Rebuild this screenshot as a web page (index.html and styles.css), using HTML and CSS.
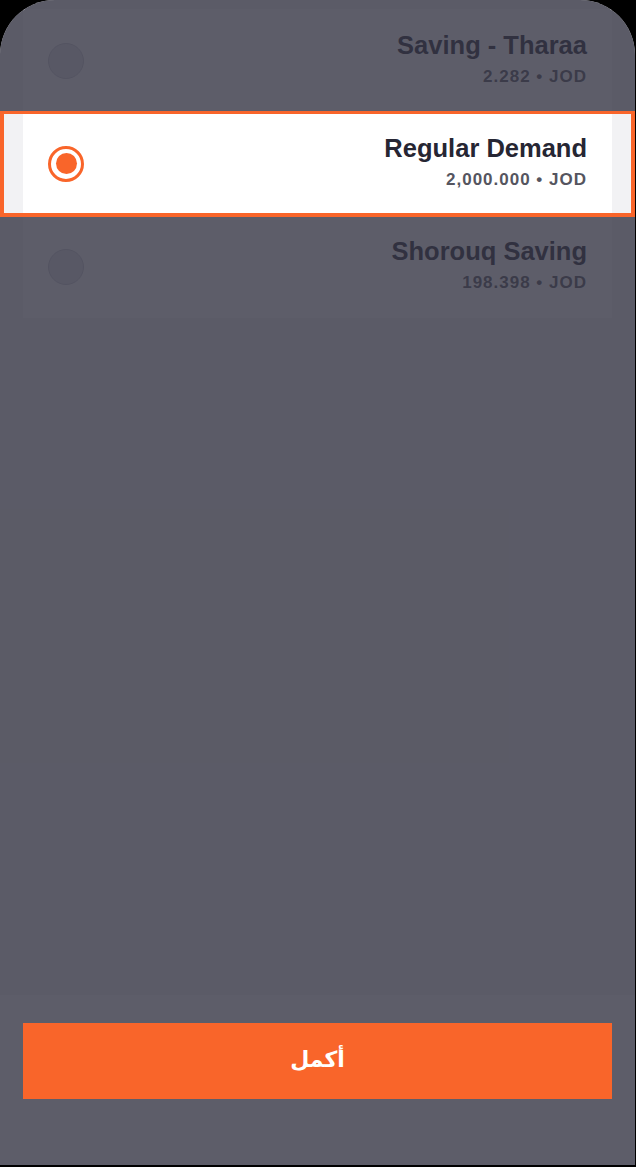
FILE: index.html
```html
<!DOCTYPE html>
<html lang="en">
<head>
<meta charset="utf-8">
<title>Select account</title>
<link rel="stylesheet" href="styles.css">
</head>
<body>
<div class="phone">
  <main class="list-area">
    <section class="card">
      <div class="row">
        <span class="radio"></span>
        <div class="info">
          <div class="title">Saving - Tharaa</div>
          <div class="amount">2.282 • JOD</div>
        </div>
      </div>
      <div class="row is-focused">
        <span class="radio is-checked"><span class="dot"></span></span>
        <div class="info">
          <div class="title">Regular Demand</div>
          <div class="amount">2,000.000 • JOD</div>
        </div>
      </div>
      <div class="row">
        <span class="radio"></span>
        <div class="info">
          <div class="title">Shorouq Saving</div>
          <div class="amount">198.398 • JOD</div>
        </div>
      </div>
    </section>
  </main>
  <footer class="footer">
    <button class="continue" dir="rtl" lang="ar">أكمل</button>
  </footer>
  <div class="overlay"></div>
</div>
</body>
</html>
```
FILE: styles.css
```css
html, body {
  margin: 0;
  padding: 0;
  background: #000;
}

body {
  width: 636px;
  height: 1167px;
  overflow: hidden;
  font-family: "Liberation Sans", Arial, sans-serif;
}

.phone {
  position: relative;
  width: 635px;
  height: 1165px;
  background: #f2f2f4;
  border-radius: 55px 55px 0 0;
  overflow: hidden;
  display: flex;
  flex-direction: column;
}

.list-area {
  flex: 1;
  padding-top: 9px;
}

.card {
  margin: 0 23px;
  background: #fff;
  border-radius: 0 0 8px 8px;
}

.row {
  display: flex;
  align-items: center;
  justify-content: space-between;
  height: 103px;
  box-sizing: border-box;
  padding: 0 25px;
  background: #fff;
}

.row.is-focused {
  position: relative;
  z-index: 2;
}

.row.is-focused::before {
  content: "";
  position: absolute;
  top: -1px;
  bottom: -2px;
  left: -23px;
  right: -23px;
  z-index: -1;
  border: 4px solid #f9652a;
  border-top-width: 3.5px;
  background-clip: padding-box;
  background-image: linear-gradient(to right,
      #f2f2f4 19px, #fff 19px,
      #fff calc(100% - 19px), #f2f2f4 calc(100% - 19px));
}

.radio {
  box-sizing: border-box;
  width: 36px;
  height: 36px;
  border-radius: 50%;
  background: #e4e4e9;
  border: 1.5px solid #cdcdd5;
  display: flex;
  align-items: center;
  justify-content: center;
  flex: none;
}

.radio.is-checked {
  background: #fff;
  border: 3px solid #f9652a;
}

.radio .dot {
  width: 21px;
  height: 21px;
  border-radius: 50%;
  background: #f9652a;
}

.info {
  text-align: right;
  margin-top: -3px;
}

.title {
  font-size: 25.5px;
  line-height: 30px;
  font-weight: bold;
  color: #262633;
  margin-bottom: 6px;
}

.amount {
  font-size: 17px;
  line-height: 22px;
  font-weight: bold;
  color: #55555f;
  letter-spacing: 1px;
}

.footer {
  height: 170px;
  box-sizing: border-box;
  padding: 28px 23px 0;
  background: #fff;
}

.continue {
  position: relative;
  z-index: 2;
  display: flex;
  align-items: center;
  justify-content: center;
  width: 100%;
  height: 76px;
  border: none;
  border-radius: 0;
  background: #f9652a;
  color: #fff;
  font-family: "DejaVu Sans", "Noto Sans", sans-serif;
  font-size: 22px;
  font-weight: bold;
  padding: 0 0 4px;
}

.overlay {
  position: absolute;
  inset: 0;
  z-index: 1;
  background: rgba(53, 53, 67, 0.8);
  pointer-events: none;
}
```
